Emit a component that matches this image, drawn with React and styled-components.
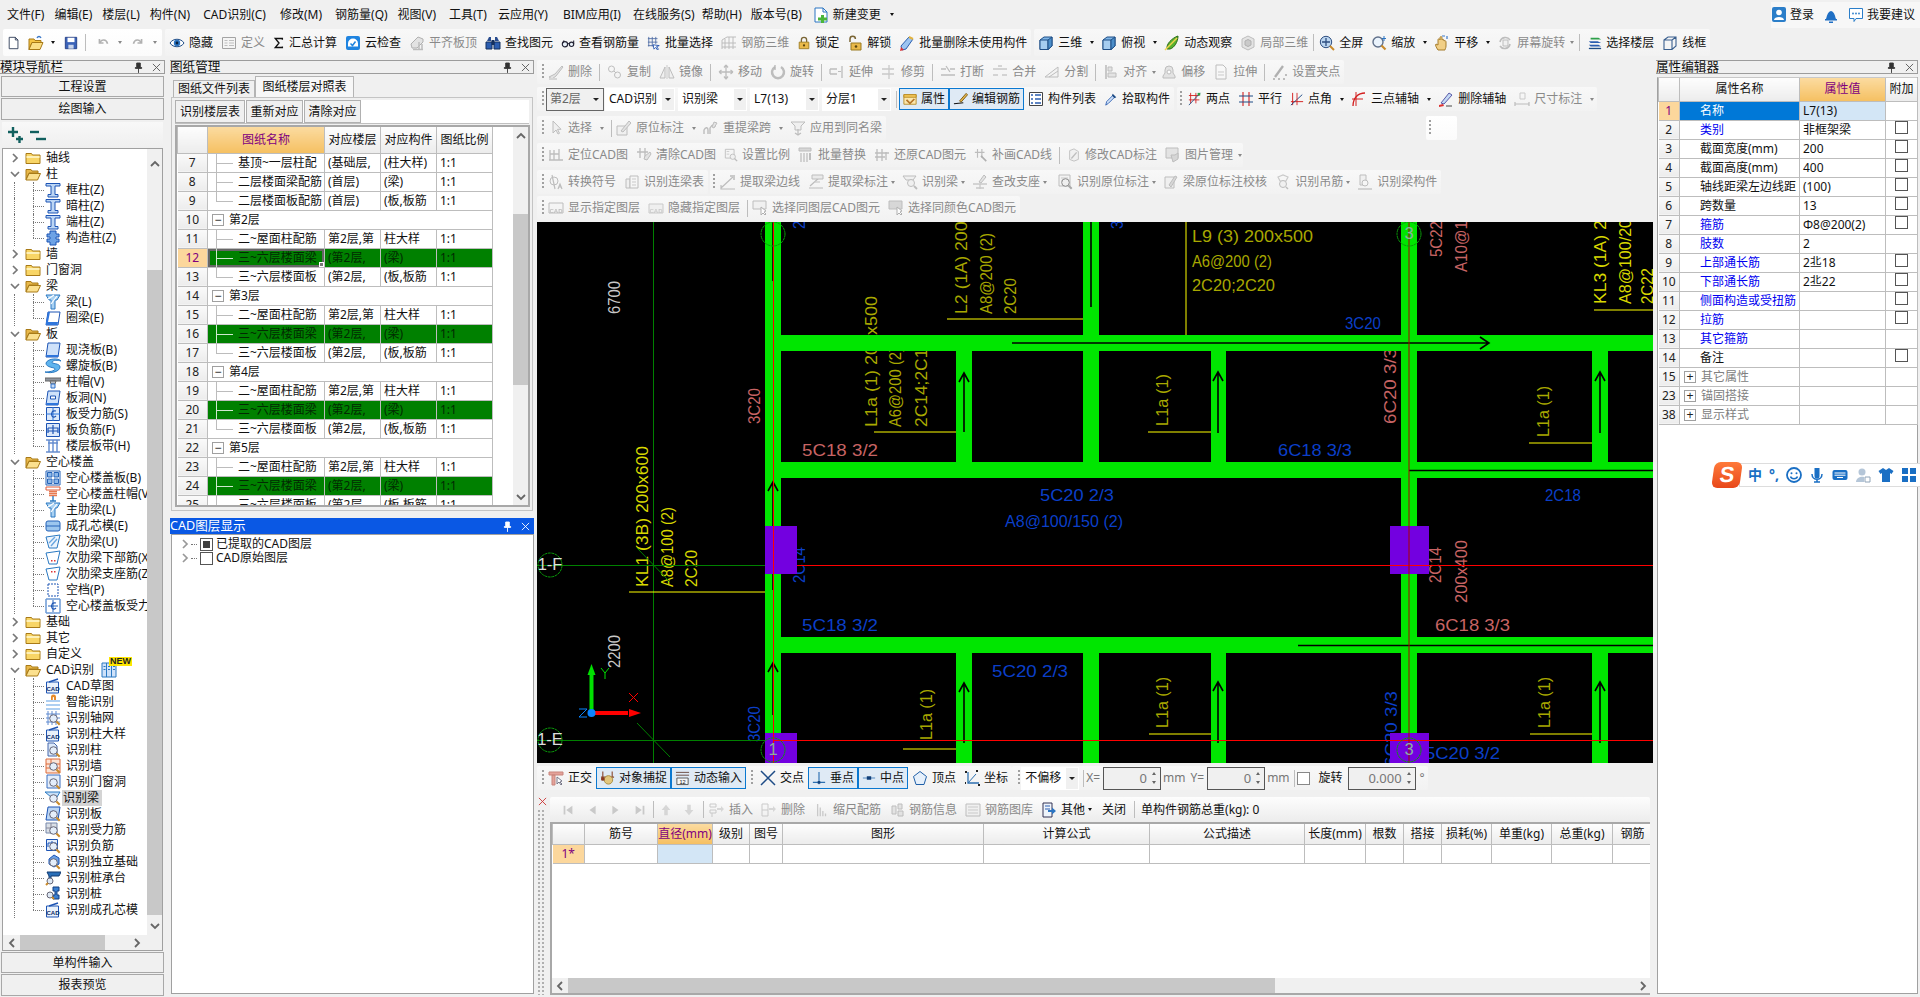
import React from 'react';
import styled, { createGlobalStyle, css } from 'styled-components';

const Global = createGlobalStyle`
  html, body { margin: 0; padding: 0; background: #f0f0f0; overflow: hidden; }
  * { box-sizing: border-box; }
  body { font-family: "Noto Sans", "Noto Sans CJK SC", sans-serif; font-size: 12px; color: #111; }
`;

const line = (d, c = '#555', w = 1) => <path d={d} fill="none" stroke={c} strokeWidth={w} />;
const fill = (d, f, c = 'none') => <path d={d} fill={f} stroke={c} />;
const mag = <g><circle cx="8.5" cy="8.5" r="3.8" fill="#e4eefa" stroke="#667" /><path d="M11.5 11.5l3.2 3.2" stroke="#c98a2a" strokeWidth="2" /></g>;
const cadTxt = (f = '#123') => <text x="8" y="13" fontSize="6" fontWeight="700" textAnchor="middle" fontFamily="Liberation Sans" fill={f}>CAD</text>;

const ICONS = {
  page: <>{fill('M2.5 1.5h7l3 3v10h-10z', '#fff', '#2b3a55')}{line('M9.5 1.5v3h3', '#2b3a55')}</>,
  open: <>{fill('M1 4h5l1 1.5h6v2H4l-3 7z', '#f6c544', '#a87a17')}{fill('M4 7.5h11l-3 7H1z', '#fbdf86', '#a87a17')}{line('M9 3c1-2 3-2 4 0', '#3a78c9', 1.3)}</>,
  save: <>{fill('M1.5 1.5h13v13h-13z', '#3a62b8', '#1f3a80')}{fill('M4 2h8v5H4z', '#fff')}{fill('M5 10h6v4.5H5z', '#c8d4ea')}</>,
  undo: <>{line('M3 3v5h5', '#999', 2)}{line('M3.5 8c2-5 8-5 9.5 1', '#999', 2)}</>,
  redo: <>{line('M13 3v5H8', '#999', 2)}{line('M12.5 8c-2-5-8-5-9.5 1', '#999', 2)}</>,
  eye: <>{fill('M1 8c3-5 11-5 14 0-3 5-11 5-14 0z', '#fff', '#1e4c86')}<circle cx="8" cy="8" r="3.2" fill="#2b74c2" /><circle cx="8" cy="8" r="1.4" fill="#0a2340" /></>,
  deflist: <>{fill('M1.5 2.5h13v11h-13z', '#f4f4f4', '#888')}{line('M3.5 5.5h3M3.5 8h3M3.5 10.5h3M8 5.5h5M8 8h5M8 10.5h5', '#aaa')}</>,
  sigma: <>{line('M12.5 3.5V2H3l5 6-5 6h9.5v-1.5', '#111', 1.8)}</>,
  cloud: <><rect x="1" y="1" width="14" height="14" rx="2" fill="#1f84e0" /><path d="M3 8.5a5 5 0 0 1 10 0v3H3z" fill="#fff" />{line('M5.5 8.5l2 2 3-4', '#1f84e0', 1.5)}</>,
  align: <>{fill('M2 9l7-7 5 2v3L8 13H3z', '#ddd', '#999')}{line('M4 14.5h10M10 7v7M13 9v5', '#aaa', 1.5)}</>,
  binoc: <>{fill('M2 6l2-4h2v4zM10 6V2h2l2 4z', '#2a4d8f')}{fill('M1 7h6v7H1zM9 7h6v7H9z', '#2b5db0', '#14305f')}{fill('M6.5 5h3v5h-3z', '#14305f')}</>,
  glasses: <><circle cx="4.5" cy="9.5" r="3" fill="#eaf2fb" stroke="#223" strokeWidth="1.3" /><circle cx="12" cy="9.5" r="2.5" fill="#eaf2fb" stroke="#223" strokeWidth="1.3" />{line('M7.5 9c1-1 1-1 2 0M1.5 9l2-4M14.5 9V5', '#223', 1.2)}</>,
  gridsel: <>{line('M2 1v11M6 1v11M10 1v8M1 3h11M1 7h11M1 11h7', '#4f6da6')}{fill('M7 10l7 1-3 1 2 3-1 1-2-3-2 2z', '#fff', '#1e4fae')}</>,
  rebar3d: <>{line('M1 5l5-3h9M1 5v9l0 0M4 4v10M8 2v12M12 2v12M1 8h14M1 12h14', '#aaa')}</>,
  lock: <>{line('M5 7V4.5a3 3 0 0 1 6 0V7', '#7a6535', 1.5)}{fill('M2.5 7h11v7.5h-11z', '#e9b94a', '#9a7a20')}<circle cx="8" cy="10.8" r="1.3" fill="#5a4510" /></>,
  unlock: <>{line('M3 7V4a2.7 2.7 0 0 1 5.4 0', '#7a6535', 1.5)}{fill('M4 8h10v7H4z', '#e9b94a', '#9a7a20')}<circle cx="9" cy="11.5" r="1.3" fill="#5a4510" /></>,
  brushdel: <>{fill('M2 11l8-9 4 2-7 10-4 1z', '#9cc4f0', '#2c5fae')}{fill('M2 12l3 3-4 1z', '#d33')}{line('M10 2l4 2', '#e4b440', 2)}</>,
  cube: <>{fill('M2 5l4-3h8v9l-4 3.5H2z', '#7fb5e6', '#1f4e86')}{fill('M2 5h8v9.5H2z', '#a6cdf0', '#1f4e86')}{fill('M10 5l4-3v9l-4 3.5z', '#4c8ec9', '#1f4e86')}</>,
  orbit: <>{fill('M3 14C2 9 8 3 14 1c0 6-4 12-8 13z', '#58b12f', '#2b6b16')}{line('M1 15L13 3', '#f2d34d', 1.4)}</>,
  local3d: <>{fill('M8 1l6 3v8l-6 3-6-3V4z', '#ddd', '#aaa')}{fill('M5 6l3-1.5L11 6v4l-3 1.5L5 10z', '#bbb', '#999')}</>,
  zoomall: <><circle cx="7" cy="7" r="5.7" fill="#bcd6f0" stroke="#2e4e80" />{line('M7 3v8M3 7h8', '#2e4e80', 1.3)}{line('M11 11l4 4', '#c98a2a', 2)}</>,
  zoom: <><circle cx="7" cy="7" r="5" fill="#eaf3fc" stroke="#60708a" strokeWidth="1.4" />{line('M10.5 10.5l4 4', '#c98a2a', 2.2)}{line('M13 1v5M11 3.5h4', '#2b74c2')}</>,
  hand: <>{fill('M4 15c-2-3-3-5-2-6l2 1V5c0-2 2-1 2 0V3c0-2 2-2 2 0v2c1-1 2-1 2 1 1-1 2 0 2 1v4c0 2-1 3-1 4z', '#f1cf86', '#a67c2b')}{line('M8 1l3-0M13 1v3', '#3a78c9', 1.2)}</>,
  rotscreen: <>{line('M3 7a5.5 5.5 0 0 1 10-2M13 9a5.5 5.5 0 0 1-10 2', '#aaa', 1.6)}{fill('M6 5h5v6H6z', '#eee', '#aaa')}</>,
  floors: <>{fill('M3 2h9l3 2H3z', '#2ea04a')}{fill('M1 6h10l4 2H3z', '#2b5db0')}{fill('M1 10h11l3 2H3z', '#2b5db0')}{fill('M1 13.5h14v1.5H1z', '#1e4c86')}</>,
  wire: <>{line('M2 5l4-3h8v9l-4 3.5H2zM2 5h8v9.5M10 5l4-3', '#3a5f8e', 1.1)}</>,
  erase: <>{fill('M1 13l6-3 7-8 1 1-7 9-4 3z', '#ddd', '#aaa')}{line('M1 15h8', '#ccc', 2)}</>,
  copy: <><circle cx="4.5" cy="5" r="3" fill="none" stroke="#aaa" /><circle cx="10.5" cy="11" r="3" fill="none" stroke="#aaa" />{line('M7 7l2 2', '#aaa')}</>,
  mirror: <>{fill('M1 14L6 3v11z', '#eee', '#aaa')}{fill('M15 14L10 3v11z', '#eee', '#aaa')}{line('M8 1v14', '#bbb')}</>,
  move: <>{line('M8 1v14M1 8h14M8 1L6 3.5M8 1l2 2.5M8 15l-2-2.5M8 15l2-2.5M1 8l2.5-2M1 8l2.5 2M15 8l-2.5-2M15 8l-2.5 2', '#aaa', 1.3)}</>,
  rot: <>{line('M5 3a6 6 0 1 0 6 0', '#aaa', 2.5)}{line('M5 1v5', '#999', 1.2)}</>,
  extend: <>{line('M1 5h7M1 10h7M1 5v5M13 2v12', '#aaa', 1.3)}{line('M9 7.5h3', '#aaa')}</>,
  trim: <>{line('M8 1v14M1 5h12M1 10h12', '#bbb', 1.3)}</>,
  brk: <>{line('M1 5h5M10 5h5M1 11h14M6 2l4 6', '#aaa', 1.3)}</>,
  merge: <>{line('M1 5h14M1 11h5M10 11h5M6 2l4 0', '#bbb', 1.3)}</>,
  split: <>{fill('M1 13L14 3v10z', '#f2f2f2', '#aaa')}{line('M5 13l9-6', '#aaa')}</>,
  alignl: <>{line('M3 1v14', '#999', 1.3)}{fill('M5 3h4v4H5zM5 9h8v4H5z', '#ddd', '#aaa')}</>,
  offset: <><path d="M8 2a4 4 0 0 1 4 4v3l2 3v2H2v-2l2-3V6a4 4 0 0 1 4-4z" fill="#ddd" stroke="#aaa" /><circle cx="8" cy="8" r="2" fill="#fff" stroke="#aaa" /></>,
  stretch: <>{fill('M3 1h7l3 3v11H3z', '#f8f8f8', '#aaa')}{line('M5 8h6M5 11h6', '#bbb')}</>,
  grips: <>{line('M3 13L11 2', '#999', 2.3)}{line('M1 15h2M6 15h2M11 15h2M14 10v2', '#aaa', 2)}</>,
  prop: <>{fill('M1 3h14v11H1z', '#fbe7ae', '#b78a24')}{fill('M1 3h14v3H1z', '#f3c75a', '#b78a24')}{line('M4 9l4 4 5-5', '#b5762a', 2)}</>,
  pen: <>{line('M1 13c4-1 6 0 10-1', '#111', 1.2)}{fill('M7 10l7-8 1.5 1.5-7 8z', '#e7b64a', '#7a5a12')}</>,
  list: <>{fill('M1.5 1.5h13v13h-13z', '#fff', '#444')}{line('M3 4h2M3 8h2M3 12h2M7 4h6M7 8h6M7 12h6', '#2b5db0', 1.4)}</>,
  dropper: <>{fill('M2 15l1-4 7-7 2 2-7 7z', '#cfe1f6', '#2b5db0')}{fill('M10 2l4 4-2 1-3-3z', '#1e4c86')}</>,
  xtwo: <>{line('M3 1v12M9 1v12M1 4h12M1 9h12', '#d32020')}{line('M1 15L14 1', '#1e4c86')}{fill('M11 1h3v3h-3z', '#2ea04a')}</>,
  xpar: <>{line('M5 1v14M11 1v14', '#d32020', 1.1)}{line('M1 5h14M1 11h14', '#1e4c86', 1.1)}</>,
  xang: <>{line('M3 1v14M1 11h14', '#d32020', 1.1)}{line('M1 15L14 3', '#1e4c86', 1.1)}{line('M8 1v14', '#d32020')}</>,
  xarc: <>{line('M2 15C2 7 7 2 14 2', '#d32020', 1.3)}{line('M5 1v14M1 8h11', '#d32020')}</>,
  xdel: <>{fill('M3 12l8-10 3 2-8 9z', '#c3d9f5', '#5a5aa8')}{fill('M1 14l4-1 1 2-5 1z', '#d33')}{line('M8 15h6', '#777', 1.4)}</>,
  dim: <>{line('M1 15V11M15 15V11M1 13h14', '#aaa', 1.2)}{line('M6 2h5v6H6z', '#bbb')}</>,
  cursor: <>{fill('M5 1v12l3-3 2 4 1.5-.7-2-4H13z', '#eee', '#aaa')}</>,
  orig: <>{fill('M1 6h10v9H1z', '#eee', '#aaa')}{fill('M5 11l8-10 2 2-8 9z', '#ddd', '#aaa')}</>,
  rebeam: <>{line('M1 14V10c2-4 4-2 4 0v4M7 14V8c3-5 5-3 5-1', '#aaa', 1.4)}{fill('M11 2l3 1-3 5-2-1z', '#ddd', '#aaa')}</>,
  apply: <>{fill('M1 2h14l-4 4v4H5V6z', '#eee', '#aaa')}{line('M8 9v6M5 13l3 2 3-2', '#aaa', 1.2)}</>,
  cadpin: <>{line('M2 3v10M6 3v10M2 7h9M1 13h14M11 2v11', '#aaa', 1.3)}</>,
  cadclr: <>{line('M4 1v10M9 1v10M1 5h11', '#aaa', 1.3)}{fill('M9 9l5-4 1 2-4 6-3-1z', '#ddd', '#aaa')}</>,
  scale: <>{fill('M1.5 1.5h10v10h-10z', '#f4f4f4', '#aaa')}{line('M3 4h3M3 7h3', '#bbb')}<circle cx="10" cy="10" r="3" fill="#eee" stroke="#aaa" />{line('M12 12l3 3', '#aaa', 1.6)}</>,
  swap: <>{fill('M1 1h12v3H1z', '#ccc', '#aaa')}{line('M3 6v9M6 6v9M9 6v9', '#bbb', 1.6)}{line('M12 6v7', '#aaa', 2)}</>,
  restore: <>{line('M3 2v12M8 2v12M1 6h14M12 5v8M1 10h10', '#aaa', 1.3)}</>,
  redraw: <>{line('M4 1v10M9 1v10M1 5h11', '#aaa', 1.3)}{line('M8 9l6 6', '#999', 1.8)}</>,
  cadedit: <>{fill('M3 3l5-2 5 3v9l-5 2-5-2z', '#eee', '#aaa')}{line('M5 12l6-7', '#aaa', 1.5)}</>,
  pic: <>{fill('M1 1h12v10H1z', '#ddd', '#aaa')}{fill('M6 8h4l3-2v6l-5 3z', '#ccc', '#aaa')}</>,
  phi: <>{line('M4 1l3 14', '#aaa', 1.2)}<circle cx="6" cy="7" r="4" fill="none" stroke="#aaa" />{line('M10 15l2-5 2 5M11 13h2', '#aaa', 1.2)}</>,
  lbl: <>{fill('M2 5h4v9H2z', '#eee', '#aaa')}{fill('M6 2h8v12H6z', '#f6f6f6', '#aaa')}{line('M8 5h4M8 8h4M8 11h4', '#bbb')}</>,
  edge: <>{line('M1 14L14 2M1 11V15H15', '#aaa', 1.2)}{fill('M10 1h5v5h-2V3h-3z', '#bbb')}</>,
  mark: <>{line('M1 14h14M2 12L12 3', '#aaa', 1.2)}{fill('M4 1h11v4H4z', '#e6e6e6', '#aaa')}{line('M6 8h6', '#bbb', 1.2)}</>,
  recog: <>{fill('M1 2h13l-3 4H4z', '#eee', '#aaa')}<circle cx="9" cy="9" r="3.5" fill="#eee" stroke="#aaa" />{line('M12 12l3 3', '#aaa', 1.8)}</>,
  support: <>{line('M1 10h14M8 10v5M4 14h8', '#bbb', 1.3)}{fill('M7 8l5-7 2 2-5 6z', '#ddd', '#aaa')}</>,
  recmark: <>{fill('M2 1h11v11H2z', '#f2f2f2', '#aaa')}{line('M4 4h7M4 7h5', '#bbb')}{mag}</>,
  check: <>{fill('M2 3h9v11H2z', '#eee', '#aaa')}{fill('M6 11l6-9 2 1-6 10z', '#ccc', '#aaa')}</>,
  hang: <>{line('M3 3l5-2 5 2-2 4H5z', '#bbb', 1.2)}<circle cx="8" cy="10" r="3.5" fill="#eee" stroke="#aaa" />{line('M11 13l2 2', '#aaa', 1.5)}</>,
  recbeam: <>{fill('M3 1h6v10H3z', '#eee', '#aaa')}<circle cx="8" cy="9" r="3" fill="#f6f6f6" stroke="#aaa" />{line('M1 15h14', '#bbb', 1.6)}</>,
  cadshow: <>{fill('M1 3h14v10H1z', '#f4f4f4', '#aaa')}{cadTxt('#aaa')}</>,
  cadhide: <>{fill('M1 4h14v9H1z', '#ededed', '#bbb')}{cadTxt('#bbb')}</>,
  cadsel: <>{fill('M1 1h13v8H1z', '#eee', '#aaa')}{fill('M9 7v8l2-2 2 2 1-1-2-2 2-1z', '#fff', '#999')}</>,
  cadcol: <>{fill('M1 1h13v8H1z', '#ccc', '#aaa')}{fill('M9 7v8l2-2 2 2 1-1-2-2 2-1z', '#fff', '#999')}</>,
  ortho: <>{fill('M1 2h14v3H1zM4 5h3v10H4z', '#e4a29a', '#c9857c')}{fill('M9 7v7l2-2 2 3 1-1-2-2 2-1z', '#fff', '#778')}</>,
  snap: <>{line('M3 1v6M13 1v6M1 7h14', '#8a4a30', 1.2)}<circle cx="9" cy="10" r="4.5" fill="#e2c77e" stroke="#a78b3e" /><circle cx="3" cy="9" r="2" fill="#8a3a20" /></>,
  dyn: <>{line('M1 2h14M1 5h14', '#6a4a40')}{fill('M2 8h12v7H2z', '#f6f6f6', '#555')}<text x="8" y="14" fontSize="6" textAnchor="middle" fontFamily="Liberation Sans" fill="#111">12</text></>,
  inter: <>{line('M1 1l14 14M15 1L1 15', '#1e4c86', 1.5)}</>,
  perp: <>{line('M8 1v14M1 13h14', '#2c6fb0', 1.3)}{fill('M6.5 11.5h3v3h-3z', '#12407a')}</>,
  mid: <>{line('M1 8h14', '#7fa7d2', 1.6)}{fill('M5.5 6h5v4h-5z', '#12407a')}</>,
  vert: <>{fill('M8 1.5l6.5 5-2.5 8H4l-2.5-8z', '#e6f0fb', '#1f5fa8')}</>,
  coord: <>{line('M4 2v11h11', '#2c6fb0', 1.3)}{line('M4 13l8-9', '#2c6fb0')}{line('M1 2h2M12 1h2M1 13h1M14 15h2', '#222', 2)}</>,
  first: <>{fill('M3 3h2v10H3zM13 3v10L6 8z', '#bbb')}</>,
  prev: <>{fill('M11 3v10L4 8z', '#bbb')}</>,
  next: <>{fill('M5 3v10l7-5z', '#bbb')}</>,
  last: <>{fill('M11 3h2v10h-2zM3 3v10l7-5z', '#bbb')}</>,
  up: <>{fill('M8 2l5 6h-3v6H6V8H3z', '#ccc')}</>,
  down: <>{fill('M8 14l5-6h-3V2H6v6H3z', '#ccc')}</>,
  ins: <>{line('M1 2h6v3H1zM1 8h6v3H1zM3 11v4', '#bbb')}{fill('M8 6h4V4l3 3-3 3V8H8z', '#ccc')}</>,
  del: <>{line('M1 2h6v12H1zM1 8h6', '#bbb')}{fill('M8 6h4V4l3 3-3 3V8H8z', '#ccc')}</>,
  bend: <>{line('M3 1v14M6 5v10M9 9v6M12 12v3', '#bbb', 1.5)}</>,
  info: <>{fill('M3 4h4v8H3zM9 2h4v5H9zM9 9h5v5H9z', '#ddd', '#aaa')}</>,
  lib: <>{fill('M1 2h14v12H1z', '#eee', '#aaa')}{line('M3 5h10M3 8h10M3 11h10', '#bbb')}</>,
  other: <>{fill('M2 1h9v14H2z', '#eef4fb', '#335')}{line('M4 4h5M4 7h5', '#2b5db0')}{fill('M7 8h4V5.5l4 3.5-4 3.5V10H7z', '#2b74c2')}</>,
  plus2: <>{line('M1 5h10M6 0v10', '#11605f', 2.4)}{line('M9 12h7M12.5 9v7', '#11605f', 2.4)}</>,
  minus2: <>{line('M0 5h9', '#11605f', 2.4)}{line('M6 12h10', '#11605f', 2.4)}</>,
  newchg: <>{fill('M2 1h8l4 4v10H2z', '#fff', '#2b74c2')}{line('M10 1v4h4', '#2b74c2')}{fill('M8 8h3v2.5h3v3h-3V16H8v-2.5H5v-3h3z', '#4bb53a')}</>,
  login: <><rect x="1" y="0" width="14" height="15" rx="2" fill="#2b7ec9" /><circle cx="8" cy="5.5" r="2.8" fill="#fff" /><path d="M3 13c0-4 10-4 10 0z" fill="#fff" /></>,
  bell: <>{fill('M3 12c1-2 1-7 5-8 4 1 4 6 5 8z', '#1f6fc4')}{fill('M2 12h12v1.5H2zM6 14.5h4V16H6z', '#1f6fc4')}</>,
  chat: <>{fill('M1.5 1.5h13v10H8l-2 3v-3H1.5z', '#fff', '#2b7ec9')}<circle cx="5" cy="6.5" r=".9" fill="#2b7ec9" /><circle cx="8" cy="6.5" r=".9" fill="#2b7ec9" /><circle cx="11" cy="6.5" r=".9" fill="#2b7ec9" /></>,
  folder: <>{fill('M1 3.5h5.5l1 1.5H15v8.5H1z', '#f8d566', '#a87a17')}{fill('M1.5 6h13v2h-13z', '#fdf0b8')}</>,
  folderOpen: <>{fill('M1 3.5h5l1 1.5h6v2H4l-3 6.5z', '#e8b84a', '#a87a17')}{fill('M4 7.5h11.5l-3 6.5H1z', '#fbe08e', '#a87a17')}</>,
  col: <>{fill('M1 1.5h14v2.5H10v8.5h3V15H3v-2.5h3V4H1z', '#bcd6f5', '#1d54b4')}</>,
  gz: <>{fill('M5 1h6v3h3v3h-3v2h3v3h-3v3H5v-3H2V9h3V7H2V4h3z', '#6da2e5', '#1d54b4')}</>,
  beam: <>{fill('M1 1h14l-3 5H10v9H6V6H4z', '#a9d1f2', '#2a79c2')}{line('M3 5l6-4M6 10l6-8', '#fff', 1.2)}</>,
  ring: <>{fill('M3 2h12l-2 13H1z', '#fff', '#1d54b4')}{fill('M1 12l2-10 2 0-2 10h10l-.5 3H1z', '#2f76dc')}</>,
  slab: <>{fill('M3 1h12l-2 14H1z', '#cfe2fa', '#1d54b4')}{fill('M1 13l1 2h11l.4-2z', '#2f76dc')}</>,
  spiral: <>{fill('M1 5c2-5 13-5 15-2-3-1-8-1-9 1s8 1 8 5-8 7-15 5c4 0 10-1 10-3S1 10 1 5z', '#5fb4ee', '#2a79c2')}</>,
  cap: <>{fill('M0 4h16v3H0z', '#8f959e', '#666')}{fill('M5 7h6l-1 3H6z', '#b8bdc4', '#666')}{fill('M6 10h4v4H6z', '#c9dcf5', '#2a6fc9')}</>,
  hole: <>{fill('M3 1h12l-2 14H1z', '#cfe2fa', '#1d54b4')}{fill('M5.5 6h5v3h-5z', '#fff', '#1d54b4')}{fill('M1 13l1 2h11l.4-2z', '#2f76dc')}</>,
  rebar: <>{fill('M1.5 1.5h13v13h-13z', '#dce9fa', '#1d54b4')}{line('M1 8h14M8 1v14', '#2f76dc')}{line('M11 5C7 4 6 7 7 10c1 2 3 1 4 0', '#1d54b4', 1.2)}</>,
  neg: <>{fill('M1.5 1.5h13v13h-13z', '#dce9fa', '#1d54b4')}{line('M3 6h10v5M3 6v5M3 9h10M8 3v9', '#1d54b4', 1.2)}</>,
  band: <>{line('M1 2h14M1 14h14M3 5h10', '#1d54b4')}{line('M4 2v12M8 2v12M12 2v12', '#5f8ad0', 1.4)}</>,
  grid4: <>{fill('M1 1h14v14H1z', '#fff', '#2463b8')}{fill('M2.5 2.5h4.5v4.5H2.5zM9 2.5h4.5v4.5H9zM2.5 9h4.5v4.5H2.5zM9 9h4.5v4.5H9z', '#8cb8ea', '#2463b8')}</>,
  capr: <>{fill('M1 1h14v3H1z', '#fff', '#dd5a3a')}{line('M4 5.5h8M4 7.5h8M4 9.5h8', '#e77a52', 1.4)}{line('M8 10v5M5 15h6', '#2a79c2', 1.4)}</>,
  core: <>{fill('M3 3h10a2 2 0 0 1 2 2v6a2 2 0 0 1-2 2H3a2 2 0 0 1-2-2V5a2 2 0 0 1 2-2z', '#9cc6ee', '#2463b8')}{line('M1 8h14', '#2463b8')}</>,
  rib: <>{fill('M1 3l14-2-3 13H4z', '#eef5fd', '#2a79c2')}{line('M4 9l6-6M6 12l6-7', '#69a6e0', 1.4)}</>,
  ribd: <>{fill('M1 3l14-2-3 13H4z', '#fff', '#2a79c2')}{fill('M6 10h1.5v1.5H6zM9 10h1.5v1.5H9z', '#d33')}</>,
  ribu: <>{fill('M1 3l14-2-3 13H4z', '#fff', '#2a79c2')}{fill('M6 5h1.5v1.5H6zM9 5h1.5v1.5H9z', '#d33')}</>,
  gapb: <><path d="M3 2h10v12H3z" fill="#fff" stroke="#1d54b4" strokeDasharray="2 1" /></>,
  rebard: <>{fill('M1 1h14v14H1z', '#fff', '#2463b8')}<path d="M1 1h14v14H1z" fill="none" stroke="#8cb8ea" strokeDasharray="1 1" />{line('M8 2v12M3 8h10', '#2463b8')}{line('M11 5C7 4 6 7 7 10c1 2 3 1 4 0', '#1d54b4', 1.2)}</>,
  cadDoc: <>{fill('M1.5 4h12v11h-12z', '#eaf2fb', '#1d54b4')}{line('M4 4l9-3', '#1d54b4', 1.4)}{cadTxt('#0c2a66')}</>,
  smart: <>{line('M1 7h14M1 11h14M1 15h14', '#5f9fe5', 1.2)}<path d="M4 1h0" />{fill('M6 6V3a2.5 2.5 0 0 1 5 0v3H9V3.5a.6.6 0 0 0-1.2 0V6z', '#e78a2a')}</>,
  axisr: <>{line('M3 1v14M7 1v14M11 1v14M1 4h14M1 8h14M1 12h14', '#5f8ad0')}{mag}</>,
  rcol: <>{fill('M3 1h6l3 3v10H3z', '#dce9fa', '#4466aa')}{mag}</>,
  rwall: <>{fill('M1 1h14v14H1z', '#fbe3d6', '#dd6a3a')}{line('M1 6h14M1 10h14M6 1v5M10 6v4', '#dd6a3a')}{mag}</>,
  rdoor: <>{fill('M2 1h13v13H2z', '#e4eefb', '#3a6fc0')}{mag}</>,
  rbeam: <>{fill('M0 2h15l-3 5H6z', '#c9e0f7', '#2a79c2')}{mag}</>,
  rslab: <>{fill('M3 1h12l-2 13H1z', '#bcd6f5', '#1d54b4')}<circle cx="8" cy="8" r="3" fill="#5fb4ee" stroke="#1d54b4" />{mag}</>,
  rbar: <>{fill('M1 1h11v10H1z', '#dadfe6', '#7788aa')}{line('M1 6h11M6 1v10', '#889')}{mag}</>,
  rneg: <>{fill('M1.5 1.5h11v11h-11z', '#e4eefb', '#1d54b4')}{line('M3 5h8v4M3 5v4M7 3v7', '#1d54b4')}{mag}</>,
  rfnd: <>{fill('M4 5l5-4 5 3v6l-5 3-5-3z', '#6da2e5', '#1d54b4')}{mag}</>,
  rcap: <>{fill('M2 2h14l-2 4H6v4H4V6z', '#2a6fb8', '#103a70')}<circle cx="5" cy="11" r="3" fill="#dfe9f5" stroke="#667" />{line('M3 13l-2 2', '#c98a2a', 2)}</>,
  rpile: <>{fill('M8 1h6v4h-2v4h2v4H8V9h2V5H8z', '#3a7fd0', '#123f80')}<circle cx="5" cy="9" r="3" fill="#dfe9f5" stroke="#667" />{line('M7 11l2 2', '#c98a2a', 2)}</>,
  lines: <>{fill('M1 1h14v14H1z', '#cfe2fa', '#2a79c2')}{line('M5.5 1v14M10.5 1v14', '#2a79c2')}{fill('M2.5 4h2v1h-2zM7 4h2v1H7zM12 4h2v1h-2zM2.5 7h2v1h-2zM7 7h2v1H7zM12 7h2v1h-2z', '#2a79c2')}</>,
  smile: <><circle cx="8" cy="8" r="7" fill="#fff" stroke="#1a6fc4" strokeWidth="1.8" /><circle cx="5.5" cy="6.2" r="1" fill="#1a6fc4" /><circle cx="10.5" cy="6.2" r="1" fill="#1a6fc4" />{line('M4.5 9.5c1 3 6 3 7 0', '#1a6fc4', 1.5)}</>,
  mic: <>{fill('M5.5 1h5v8a2.5 2.5 0 0 1-5 0z', '#1a6fc4')}{line('M3 7c0 7 10 7 10 0M8 13v2M5 15h6', '#1a6fc4', 1.5)}</>,
  kbd: <><rect x="0.5" y="3" width="15" height="10" rx="2" fill="#1a6fc4" />{line('M2.5 6h11M2.5 8.2h11M5 10.5h6', '#fff', 1)}</>,
  userlock: <><circle cx="7" cy="5" r="3.5" fill="#b5c6d8" /><path d="M1 15c0-5 6-6 8-5v5z" fill="#b5c6d8" />{fill('M10 10h5v5h-5z', '#fff', '#90a4b8')}</>,
  shirt: <>{fill('M5 1l3 2 3-2 4.5 3-2 3-1.5-1v9H4V6L2.500 7 .5 4z', '#1a6fc4')}</>,
  apps: <>{fill('M1 1h6v6H1zM9 1h6v6H9zM1 9h6v6H1zM9 9h6v6H9z', '#1a6fc4')}</>,
};

const IconSvg = styled.svg`
  width: ${p => p.$w || 16}px;
  height: ${p => p.$h || 16}px;
  flex: none;
  display: block;
  ${p => p.$off && 'filter: grayscale(1) opacity(.75);'}
`;
const Ico = ({ n, w, h, off }) => <IconSvg viewBox="0 0 16 16" $w={w} $h={h} $off={off}>{ICONS[n]}</IconSvg>;

const Page = styled.div`
  position: relative;
  width: 1920px;
  height: 997px;
  overflow: hidden;
  display: flex;
  flex-direction: column;
  background: #f0f0f0;
  line-height: 16px;
`;

/* ===== Menu ===== */
const MenuBar = styled.div`
  height: 29px;
  display: flex;
  align-items: center;
  gap: 10px;
  padding-left: 7px;
`;
const MenuItem = styled.span`
  white-space: nowrap;
  margin-left: ${p => p.$ml || 0}px;
`;
const MenuExtra = styled.div`
  display: flex;
  align-items: center;
  gap: 4px;
  white-space: nowrap;
  margin-left: 1px;
`;
const MenuRight = styled.div`
  margin-left: auto;
  display: flex;
  align-items: center;
  gap: 3px;
  padding-right: 5px;
  height: 26px;
  background: #f7f7f7;
`;

/* ===== Toolbars ===== */
const Strip = styled.div`
  display: flex;
  height: ${p => p.$h || 24}px;
  margin-top: ${p => p.$mt || 0}px;
  flex: none;
`;
const Bar = styled.div`
  display: flex;
  align-items: center;
  height: 100%;
  margin-left: ${p => p.$ml || 0}px;
  padding-right: ${p => p.$pr || 0}px;
  background: ${p => p.$white ? 'linear-gradient(#fff,#fbfbfb)' : 'linear-gradient(#f8f8f8,#f2f2f2)'};
  border-radius: 2px;
`;
const ItemBox = styled.div`
  display: flex;
  align-items: center;
  gap: ${p => p.$gap}px;
  height: 22px;
  padding: 0 4px;
  flex: none;
  margin-left: ${p => p.$ml || 0}px;
  white-space: nowrap;
  color: ${p => p.$off ? '#8a8a8a' : '#111'};
  ${p => p.$sel && css`
    padding: 0 3px;
    border: 1px solid #0a78d0;
    background: #dfeaf5;
  `}
`;
const CaretBox = styled.div`
  flex: none;
  width: ${p => p.$w}px;
  margin: 0 ${p => p.$tight ? 2 : 0}px 0 ${p => p.$tight ? -2 : 0}px;
  display: flex;
  justify-content: center;
  &::after {
    content: '';
    border-left: 2.5px solid transparent;
    border-right: 2.5px solid transparent;
    border-top: 3px solid ${p => p.$off ? '#888' : '#111'};
  }
`;
const Sep = styled.div`
  flex: none;
  width: 1px;
  height: 17px;
  background: #bdbdbd;
  margin: 0 ${p => p.$r ?? 3}px 0 ${p => p.$l ?? 3}px;
`;
const Grip = styled.div`
  flex: none;
  width: ${p => p.$w || 4}px;
  height: 16px;
  margin-left: ${p => p.$ml ?? 0}px;
  background: radial-gradient(circle at 1px 1px, #a0a0a0 1px, transparent 1px) 0 0 / 3px 4px repeat-y;
`;
const Tool = ({ i, w, t, off, c, tight, ml, sel }) => (
  <>
    <ItemBox $gap={t && i ? 4 : 0} $off={off} $ml={ml} $sel={sel}>
      {i && <Ico n={i} w={w} off={off} />}
      {t && <span>{t}</span>}
    </ItemBox>
    {c && <CaretBox $w={c} $off={off} $tight={tight} />}
  </>
);
const tools = (arr) => arr.map((a, k) => {
  if (a === '|') return <Sep key={k} />;
  if (typeof a === 'object' && a.sep) return <Sep key={k} $l={a.l} $r={a.r} />;
  return <Tool key={k} {...a} />;
});

const Combo = styled.div`
  flex: none;
  width: ${p => p.$w}px;
  height: 23px;
  margin: 0 ${p => p.$mr || 0}px 0 ${p => p.$ml || 0}px;
  display: flex;
  align-items: center;
  padding-left: 3px;
  background: ${p => p.$framed ? '#f0f0f0' : '#fff'};
  border: 1px solid ${p => p.$framed ? '#666' : '#fff'};
  color: ${p => p.$framed ? '#666' : '#111'};
  white-space: nowrap;
  position: relative;
`;
const ComboArrow = styled.span`
  margin-left: auto;
  width: ${p => p.$plain ? 14 : 12}px;
  height: 100%;
  background: ${p => p.$plain ? 'transparent' : '#f0f0f0'};
  display: flex;
  align-items: center;
  justify-content: center;
  &::after {
    content: '';
    border-left: 3px solid transparent;
    border-right: 3px solid transparent;
    border-top: 3px solid #222;
  }
`;
const Txt = styled.span`
  flex: none;
  white-space: nowrap;
  margin-left: ${p => p.$ml || 0}px;
  color: ${p => p.$c || '#111'};
`;
const NumBox = styled.div`
  flex: none;
  width: ${p => p.$w}px;
  height: 23px;
  margin-left: ${p => p.$ml || 0}px;
  background: #f0f0f0;
  border: 1px solid #555;
  display: flex;
  align-items: center;
  justify-content: flex-end;
  color: #777;
  padding-right: 4px;
  font-size: 13px;
  gap: 5px;
`;
const Spin = styled.span`
  display: flex;
  flex-direction: column;
  gap: 6px;
  &::before, &::after {
    content: '';
    border-left: 2.500px solid transparent;
    border-right: 2.500px solid transparent;
  }
  &::before { border-bottom: 3px solid #666; }
  &::after { border-top: 3px solid #666; }
`;
const Check = styled.span`
  flex: none;
  display: inline-block;
  width: 13px;
  height: 13px;
  margin-left: ${p => p.$ml || 0}px;
  background: #fff;
  border: 1px solid ${p => p.$c || '#555'};
  ${p => p.$on && css`box-shadow: inset 0 0 0 2px #fff, inset 0 0 0 7px #404040;`}
`;

/* ===== Workspace ===== */
const Workspace = styled.div`
  flex: 1;
  display: flex;
  padding-top: 4px;
  min-height: 0;
`;
const Col = styled.div`
  flex: none;
  width: ${p => p.$w}px;
  margin-right: ${p => p.$mr || 0}px;
  display: flex;
  flex-direction: column;
  min-height: 0;
  position: relative;
`;
const Title = styled.div`
  flex: none;
  height: ${p => p.$h || 14}px;
  margin-top: ${p => p.$mt || 0}px;
  display: flex;
  align-items: center;
  font-size: 12.6px;
  border: 1px solid #9c9c9c;
  border-width: 1px 1px 1px 0;
  ${p => p.$active && css`
    background: #0a58e4;
    color: #fff;
    border-color: #0a58e4;
  `}
  white-space: nowrap;
  position: relative;
`;
const TitleBtns = styled.span`
  margin-left: auto;
  display: flex;
  align-items: center;
  gap: 9px;
  padding-right: 3px;
`;
const Pin = ({ c = '#333' }) => <IconSvg viewBox="0 0 10 12" $w={9} $h={11}><path d="M3 1h4v5h1.500v1h-7V6H3zM5 7v5" fill={c} stroke={c} /></IconSvg>;
const Cross = ({ c = '#555' }) => <IconSvg viewBox="0 0 10 10" $w={9} $h={9}><path d="M1 1l8 8M9 1L1 9" stroke={c} /></IconSvg>;

const NavBtn = styled.div`
  flex: none;
  height: ${p => p.$h}px;
  margin-top: ${p => p.$mt || 0}px;
  margin-left: 1px;
  width: 163px;
  background: #f0f0f0;
  border: 1px solid #a8a8a8;
  display: flex;
  align-items: center;
  justify-content: center;
`;
const TreeTools = styled.div`
  flex: none;
  height: 26px;
  margin-top: 2px;
  margin-left: 2px;
  width: 161px;
  display: flex;
  align-items: center;
  gap: 7px;
  padding-left: 5px;
  background: linear-gradient(#f8f8f8, #efefef);
`;
const TreeFrame = styled.div`
  flex: none;
  height: 803px;
  margin-left: 2px;
  width: 161px;
  border: 1px solid #a0a0a0;
  background: #fff;
  display: flex;
  flex-direction: column;
`;
const TreeBody = styled.div`
  flex: 1;
  min-height: 0;
  display: flex;
`;
const TreeList = styled.div`
  flex: 1;
  min-width: 0;
  overflow: hidden;
  padding-top: 1px;
`;
const TreeRow = styled.div`
  position: relative;
  height: 16px;
  display: flex;
  align-items: center;
  white-space: nowrap;
  padding-left: ${p => p.$child ? 42 : 22}px;
  &::before {
    content: '';
    position: absolute;
    left: 11px;
    top: 0;
    bottom: ${p => p.$endRoot ? '8px' : '0'};
    border-left: 1px dotted #777;
  }
  ${p => p.$child && css`
    &::after {
      content: '';
      position: absolute;
      left: 30px;
      top: 0;
      width: 11px;
      height: ${p.$last ? 8 : 16}px;
      border-left: 1px dotted #777;
    }
  `}
`;
const ChildDash = styled.span`
  position: absolute;
  left: 30px;
  top: 8px;
  width: 11px;
  border-top: 1px dotted #777;
`;
const Twisty = styled.span`
  position: absolute;
  left: 6px;
  top: 0;
  height: 16px;
  width: 12px;
  background: #fff;
  display: flex;
  align-items: center;
  justify-content: center;
  z-index: 1;
`;
const TreeLabel = styled.span`
  margin-left: ${p => p.$ml ?? 4}px;
  padding: 0 1px;
  ${p => p.$sel && 'background: #d4d4d4; padding-right: 3px;'}
`;
const NewBadge = styled.span`
  position: absolute;
  left: 106px;
  top: -5px;
  background: #ffe600;
  color: #222;
  font: 700 9px/9px "Liberation Sans", sans-serif;
  padding: 0 1px;
`;
const SmallIconSlot = styled.span`
  margin-left: 6px;
  flex: none;
`;
const Chev = ({ open, c = '#777' }) => (
  <IconSvg viewBox="0 0 10 10" $w={10} $h={10}>
    <path d={open ? 'M1 3l4 4 4-4' : 'M3 1l4 4-4 4'} fill="none" stroke={c} strokeWidth="1.700" />
  </IconSvg>
);

/* scrollbars */
const VScroll = styled.div`
  flex: none;
  width: 15px;
  display: flex;
  flex-direction: column;
  background: #f0f0f0;
`;
const HScroll = styled.div`
  flex: none;
  height: 15px;
  display: flex;
  background: #f0f0f0;
  align-items: stretch;
`;
const ArrowSlot = styled.div`
  flex: none;
  ${p => p.$h ? `height: ${p.$h}px;` : ''}
  ${p => p.$w ? `width: ${p.$w}px;` : ''}
  display: flex;
  align-items: center;
  justify-content: center;
`;
const Track = styled.div`
  flex: 1;
  min-width: 0;
  min-height: 0;
  display: flex;
`;
const VThumb = styled.div`
  width: 100%;
  height: ${p => p.$len}px;
  margin-top: ${p => p.$at}px;
  background: #c8c8c8;
`;
const HThumb = styled.div`
  height: 100%;
  width: ${p => p.$len}px;
  margin-left: ${p => p.$at}px;
  background: #c8c8c8;
`;
const Arrow = ({ d }) => {
  const p = { u: 'M1 7l4-4 4 4', d: 'M1 3l4 4 4-4', l: 'M7 1L3 5l4 4', r: 'M3 1l4 4-4 4' }[d];
  return <IconSvg viewBox="0 0 10 10" $w={10} $h={10}><path d={p} fill="none" stroke="#666" strokeWidth="1.800" /></IconSvg>;
};

/* drawing panel */
const Tabs = styled.div`
  flex: none;
  height: 21px;
  margin-top: 2px;
  padding-left: 3px;
  display: flex;
  align-items: flex-end;
`;
const Tab = styled.div`
  display: flex;
  align-items: center;
  justify-content: center;
  width: ${p => p.$w}px;
  height: ${p => p.$active ? 21 : 17}px;
  border: 1px solid #b4b4b4;
  border-bottom: none;
  background: ${p => p.$active ? '#f7f7f7' : '#f0f0f0'};
`;
const TabPane = styled.div`
  flex: none;
  height: 414px;
  margin-left: 1px;
  width: 362px;
  border: 1px solid #c4c4c4;
  padding: 2px 1px 0 3px;
  display: flex;
  flex-direction: column;
`;
const BtnRow = styled.div`
  flex: none;
  height: 24px;
  width: 354px;
  display: flex;
  gap: 1px;
  background: #fff;
  border-bottom: 1px solid #c0c0c0;
`;
const SmBtn = styled.div`
  width: ${p => p.$w}px;
  height: 23px;
  display: flex;
  align-items: center;
  justify-content: center;
  background: #f0f0f0;
  border: 1px solid #b0b0b0;
`;
const GridFrame = styled.div`
  flex: none;
  height: 382px;
  width: 355px;
  margin-top: 1px;
  border: 2px solid #a8a8a8;
  display: flex;
  background: #fff;
`;
const GridClip = styled.div`
  flex: 1;
  min-width: 0;
  overflow: hidden;
`;
const Table = styled.table`
  table-layout: fixed;
  border-collapse: collapse;
  width: ${p => p.$w}px;
`;
const cellBase = css`
  height: ${p => p.$h || 19}px;
  border: 1px solid #bdbdbd;
  white-space: nowrap;
  overflow: hidden;
  font-weight: 400;
  position: relative;
`;
const Th = styled.th`
  ${cellBase}
  padding: 0;
  text-align: center;
  background: ${p => p.$hot ? 'linear-gradient(#fbdba0,#f5c062)' : 'linear-gradient(#fdfdfd,#ececec)'};
  color: ${p => p.$hot ? '#80007f' : '#111'};
  border-top: none;
`;
const RowHead = styled.td`
  ${cellBase}
  text-align: center;
  padding: 0;
  background: ${p => p.$hot ? '#fcd79c' : 'linear-gradient(#fafafa,#ececec)'};
  color: ${p => p.$hot ? '#80007f' : '#222'};
  border-left: none;
`;
const Td = styled.td`
  ${cellBase}
  padding: 0 3px 0 ${p => p.$pl ?? 3}px;
  background: ${p => p.$bg || '#fff'};
  color: ${p => p.$c || '#111'};
  ${p => p.$center && 'text-align: center;'}
  ${p => p.$leftEdge && 'border-left: 1px solid #111;'}
`;
const TreeCell = styled(Td)`
  padding-left: 30px;
  &::before {
    content: '';
    position: absolute;
    left: 8px;
    top: 0;
    height: ${p => p.$last ? 9 : 19}px;
    border-left: 1px solid ${p => p.$green ? '#cfe8cf' : '#bcbcbc'};
  }
  &::after {
    content: '';
    position: absolute;
    left: 8px;
    top: 9px;
    width: 17px;
    border-top: 1px solid ${p => p.$green ? '#cfe8cf' : '#bcbcbc'};
  }
  ${p => p.$focus && 'box-shadow: inset 0 0 0 2px #666;'}
`;
const Handle = styled.span`
  position: absolute;
  right: 0;
  bottom: 0;
  width: 5px;
  height: 5px;
  background: #777;
  border: 1px solid #fff;
  z-index: 2;
`;
const GroupInner = styled.span`
  display: flex;
  align-items: center;
  gap: 5px;
  padding-left: 2px;
`;
const PlusBox = styled.span`
  flex: none;
  width: 12px;
  height: 12px;
  margin-left: ${p => p.$ml || 0}px;
  border: 1px solid #a0a0a0;
  background: #fff;
  display: inline-flex;
  align-items: center;
  justify-content: center;
  font: 400 12px/10px "Liberation Sans", sans-serif;
  color: #222;
`;

/* layer panel */
const LayerBody = styled.div`
  flex: 1;
  border: 1px solid #a0a0a0;
  background: #fff;
  padding: 2px 0 0 8px;
  margin-bottom: 3px;
  margin-left: 1px;
`;
const LayerRow = styled.div`
  height: 14px;
  display: flex;
  align-items: center;
  gap: 0;
  white-space: nowrap;
`;
const Dots = styled.span`
  flex: none;
  width: 6px;
  margin: 0 3px 0 1px;
  border-top: 1px dotted #777;
`;
const LayerText = styled.span`margin-left: 3px;`;

/* CAD canvas */
const CanvasBox = styled.div`
  flex: none;
  height: 541px;
  margin-top: 2px;
  background: #000;
  overflow: hidden;
`;
const CadSvg = styled.svg`display: block; width: 1116px; height: 541px;`;
const CadText = styled.text`
  font-family: "Liberation Sans", sans-serif;
  font-size: 16.5px;
  fill: ${p => p.$c};
`;

const Y = '#d8d800', YD = '#a8a800', P = '#c86464', B = '#0b3fc8', W = '#c8c8c8';
const tx = (t, x, y, len, c) => ({ t, x, y, len, c });
const tv = (t, x, y, len, c) => ({ t, x, y, len, c, v: 1 });
const cadTexts = [
  tv('6700', 620, 314, 33, W), tv('2200', 620, 668, 33, W),
  tv('KL1 (3B)  200x600', 648, 587, 141, Y), tv('A8@100 (2)', 673, 587, 80, Y), tv('2C20', 697, 587, 37, Y),
  tv('3C20', 760, 424, 36, P), tx('5C18  3/2', 802, 456, 76, P),
  tv('L1a (1)  200x500', 877, 427, 131, YD), tv('A6@200 (2)', 901, 427, 80, YD), tv('2C14;2C14', 927, 427, 88, YD),
  tv('L2 (1A)  200x500', 967, 314, 131, YD), tv('A8@200 (2)', 992, 314, 81, YD), tv('2C20', 1016, 314, 36, YD),
  tv('2C14', 805, 229, 36, B), tv('3C20', 1123, 229, 36, B),
  tx('5C20  2/3', 1040, 501, 74, B), tx('A8@100/150 (2)', 1005, 527, 118, B),
  tv('2C14', 805, 583, 36, B),
  tx('L9 (3)   200x500', 1192, 242, 121, YD), tx('A6@200 (2)', 1192, 267, 80, YD), tx('2C20;2C20', 1192, 291, 83, YD),
  tx('3C20', 1345, 329, 36, B), tv('L1a (1)', 1168, 426, 52, YD), tx('6C18  3/3', 1278, 456, 74, B),
  tv('6C20  3/3', 1396, 424, 76, P), tv('5C22', 1442, 257, 36, P), tv('A10@100/150 (2)', 1467, 272, 120, P),
  tv('KL3 (1A)  200x400', 1606, 304, 141, Y), tv('A8@100/200 (2)', 1631, 304, 118, Y), tv('2C22', 1653, 304, 36, Y),
  tv('L1a (1)', 1549, 437, 51, YD), tx('2C18', 1545, 501, 36, B),
  tv('2C14', 1441, 583, 36, P), tv('200x400', 1467, 603, 63, P),
  tx('6C18  3/3', 1435, 631, 75, P), tx('5C18  3/2', 802, 631, 76, B), tx('5C20  2/3', 992, 677, 76, B),
  tv('L1a (1)', 932, 740, 51, YD), tv('3C20', 760, 742, 36, B),
  tv('L1a (1)', 1168, 728, 51, YD), tv('L1a (1)', 1550, 728, 51, YD),
  tv('6C20  3/3', 1397, 767, 76, B), tx('5C20  3/2', 1425, 759, 75, B),
];
const GREEN = '#00e600';
const beams = [
  [765, 222, 16, 541], [1401, 222, 16, 541],
  [781, 335, 872, 16], [781, 462, 872, 16], [781, 637, 872, 16],
  [956, 351, 16, 111], [956, 653, 16, 110],
  [1083, 222, 16, 113], [1083, 351, 16, 111], [1083, 653, 16, 110],
  [1211, 351, 15, 111], [1211, 653, 15, 110],
  [1592, 351, 16, 111], [1592, 653, 16, 110],
];
const purples = [[765, 526, 32, 48], [1390, 526, 39, 48], [765, 733, 32, 30], [1390, 733, 39, 30]];
const yellowLines = ['M629 592h136', 'M874 432h82', 'M947 319h136', 'M1186 222v113', 'M1148 432h63', 'M1594 310h59', 'M1529 443h63', 'M903 749h53', 'M1149 734h62', 'M1530 734h62'];
const upArrows = [[773, 482, 526], [964, 373, 432], [964, 683, 743], [1218, 372, 433], [1218, 682, 743], [1600, 372, 433], [1600, 682, 743], [773, 663, 715]];
const ringC = [[773, 234, ''], [1409, 234, '3'], [773, 750, '1'], [1409, 750, '3'], [550, 565, '1-F'], [550, 740, '1-E']];

const CadDrawing = () => (
  <CadSvg viewBox="537 222 1116 541">
    {cadTexts.map((d, k) => (
      <CadText key={k} x={d.x} y={d.y} $c={d.c} textLength={d.len} lengthAdjust="spacingAndGlyphs"
        transform={d.v ? `rotate(-90 ${d.x} ${d.y})` : undefined}>{d.t}</CadText>
    ))}
    <path d="M653.500 222v541M537 565.500h228M537 740.500h228M637 548l33 34M637 723l33 34" stroke="#008000" fill="none" />
    {yellowLines.map((d, k) => <path key={k} d={d} stroke="#ffff00" fill="none" />)}
    {beams.map((b, k) => <rect key={k} x={b[0]} y={b[1]} width={b[2]} height={b[3]} fill={GREEN} />)}
    <path d="M1012 343h476M1480 337l9 6-9 6M1091 222v85M773 222v59M773 574v16M1298 645.500h355M1409 470.500h244" stroke="#000" strokeWidth="1.600" fill="none" />
    {upArrows.map((a, k) => <path key={k} d={`M${a[0] - 5} ${a[1] + 9}L${a[0]} ${a[1]}L${a[0] + 5} ${a[1] + 9}M${a[0]} ${a[1]}V${a[2]}`} stroke="#000" strokeWidth="1.600" fill="none" />)}
    {purples.map((b, k) => <rect key={k} x={b[0]} y={b[1]} width={b[2]} height={b[3]} fill="#7300e0" />)}
    <path d="M773.500 222v541M797 565.500h856M773 740.500h880" stroke="#f00" strokeWidth="1" fill="none" />
    <path d="M1409 222v541" stroke="#a80000" strokeWidth="1" fill="none" />
    {ringC.map((c, k) => (
      <g key={k}>
        <circle cx={c[0]} cy={c[1]} r="12" fill="none" stroke="#0a9a0a" strokeDasharray="3 .6" />
        <CadText x={c[0]} y={c[1] + 5} $c={k > 3 ? '#ddd' : '#8ab0a0'} textAnchor="middle">{c[2]}</CadText>
      </g>
    ))}
    <path d="M591.500 713V672" stroke="#00e000" strokeWidth="4" />
    <path d="M591.500 664l-4 11h8z" fill="#00e000" />
    <path d="M592 713h36" stroke="#f00" strokeWidth="4" />
    <path d="M641 713l-12-4v8z" fill="#f00" />
    <circle cx="591.500" cy="713" r="4" fill="#0a84ff" />
    <path d="M601 668l4 5 4-5M605 673v6" stroke="#00e000" fill="none" />
    <path d="M629 693l9 9M638 693l-9 9" stroke="#f00" fill="none" />
    <path d="M579 709h8l-8 8h8" stroke="#0a84ff" fill="none" />
  </CadSvg>
);

/* Bottom panel */
const BottomWrap = styled.div`
  flex: none;
  height: 198px;
  margin-top: 7px;
  display: flex;
`;
const Gutter = styled.div`
  flex: none;
  width: 13px;
  padding: 0 0 0 1px;
  display: flex;
  flex-direction: column;
  align-items: flex-start;
`;
const GutterDots = styled.div`
  flex: 1;
  width: 8px;
  margin-top: 4px;
  background: radial-gradient(circle at 1px 1px, #b0b0b0 1px, transparent 1px) 0 0 / 4px 4px;
`;
const BottomMain = styled.div`
  flex: none;
  width: 1100px;
  display: flex;
  flex-direction: column;
`;
const BottomBar = styled(Bar)`
  flex: none;
  height: 25px;
  background: linear-gradient(#fdfdfd, #ececec);
  padding-left: 7px;
`;
const BottomFrame = styled.div`
  flex: none;
  height: 173px;
  border: 1px solid #a8a8a8;
  border-width: 2px 0 2px 2px;
  display: flex;
  flex-direction: column;
  background: #fff;
`;
const BottomClip = styled.div`
  flex: 1;
  min-height: 0;
  overflow: hidden;
`;

/* Properties panel */
const PropFrame = styled.div`
  flex: 1;
  margin: 3px 0 3px 1px;
  border: 1px solid #a0a0a0;
  border-top: 1px solid #c8c8c8;
  background: #fff;
`;
const Sogou = styled.div`
  position: absolute;
  left: 1713px;
  top: 462px;
  width: 207px;
  height: 26px;
  display: flex;
  align-items: center;
`;
const SogouLogo = styled.div`
  flex: none;
  width: 28px;
  height: 26px;
  border-radius: 6px;
  background: linear-gradient(#ff7a3a, #e8481a);
  color: #fff;
  font: 700 22px/26px "Liberation Sans", sans-serif;
  text-align: center;
  transform: skew(-8deg);
  z-index: 1;
`;
const SogouBar = styled.div`
  flex: 1;
  height: 24px;
  margin-left: -2px;
  background: #fff;
  border: 1px solid #ddd;
  border-right: none;
  display: flex;
  align-items: center;
  gap: 7px;
  padding-left: 8px;
  color: #1a6fc4;
  font-weight: 700;
  font-size: 14px;
`;

const floorRows = (n, k) => [
  { g: `第${k}层`, n },
  { n: n + 1, name: '二~屋面柱配筋', a: '第2层,第', b: '柱大样', c: '1:1' },
  { n: n + 2, name: '三~六层楼面梁', a: '(第2层,', b: '(梁)', c: '1:1', green: 1 },
  { n: n + 3, name: '三~六层楼面板', a: '(第2层,', b: '(板,板筋', c: '1:1', last: 1 },
];
const sheetRows = [
  { n: 7, name: '基顶~一层柱配', a: '(基础层,', b: '(柱大样)', c: '1:1' },
  { n: 8, name: '二层楼面梁配筋', a: '(首层)', b: '(梁)', c: '1:1' },
  { n: 9, name: '二层楼面板配筋', a: '(首层)', b: '(板,板筋', c: '1:1', last: 1 },
  ...floorRows(10, 2), ...floorRows(14, 3), ...floorRows(18, 4), ...floorRows(22, 5),
];

const SheetTable = () => (
  <Table $w={315}>
    <colgroup><col width="30" /><col width="117" /><col width="56" /><col width="56" /><col width="56" /></colgroup>
    <thead>
      <tr>
        <Th $h={26} />
        <Th $h={26} $hot>图纸名称</Th>
        <Th $h={26}>对应楼层</Th>
        <Th $h={26}>对应构件</Th>
        <Th $h={26}>图纸比例</Th>
      </tr>
    </thead>
    <tbody>
      {sheetRows.map(r => {
        const hot = r.n === 12;
        if (r.g) {
          return (
            <tr key={r.n}>
              <RowHead>{r.n}</RowHead>
              <Td colSpan={4} $pl={2}><GroupInner><PlusBox>−</PlusBox>{r.g}</GroupInner></Td>
            </tr>
          );
        }
        const bg = r.green ? '#008000' : '#fff';
        const c = r.green ? '#022a02' : '#111';
        return (
          <tr key={r.n}>
            <RowHead $hot={hot}>{r.n}</RowHead>
            <TreeCell $bg={bg} $c={c} $green={r.green} $last={r.last} $focus={hot}>
              {r.name}{hot && <Handle />}
            </TreeCell>
            <Td $bg={bg} $c={c}>{r.a}</Td>
            <Td $bg={bg} $c={c}>{r.b}</Td>
            <Td $bg={bg} $c={c}>{r.c}</Td>
          </tr>
        );
      })}
    </tbody>
  </Table>
);

const propRows = [
  ['名称', 'L7(13)', 0, 0, 'sel'],
  ['类别', '非框架梁', 1, 1], ['截面宽度(mm)', '200', 0, 1], ['截面高度(mm)', '400', 0, 1],
  ['轴线距梁左边线距', '(100)', 0, 1], ['跨数量', '13', 0, 1], ['箍筋', '\u03a68@200(2)', 1, 1], ['肢数', '2', 1, 0],
  ['上部通长筋', '2\u4e2018', 1, 1], ['下部通长筋', '2\u4e2022', 1, 1], ['侧面构造或受扭筋', '', 1, 1], ['拉筋', '', 1, 1],
  ['其它箍筋', '', 1, 0], ['备注', '', 0, 1],
];
const PropTable = () => (
  <Table $w={259}>
    <colgroup><col width="21" /><col width="120" /><col width="86" /><col width="32" /></colgroup>
    <thead>
      <tr>
        <Th $h={23} />
        <Th $h={23}>属性名称</Th>
        <Th $h={23} $hot>属性值</Th>
        <Th $h={23}>附加</Th>
      </tr>
    </thead>
    <tbody>
      {propRows.map((r, k) => {
        const sel = r[4] === 'sel';
        return (
          <tr key={k}>
            <RowHead $hot={sel}>{k + 1}</RowHead>
            <Td $pl={20} $bg={sel ? '#0078d7' : '#fff'} $c={sel ? '#fff' : r[2] ? '#0000f0' : '#111'}>{r[0]}</Td>
            <Td $bg={sel ? '#d3e6f6' : '#fff'}>{r[1]}</Td>
            <Td $center>{r[3] ? <Check /> : null}</Td>
          </tr>
        );
      })}
      {[[15, '其它属性'], [23, '锚固搭接'], [38, '显示样式']].map(r => (
        <tr key={r[0]}>
          <RowHead>{r[0]}</RowHead>
          <Td $pl={2} $c="#808080"><GroupInner><PlusBox>+</PlusBox>{r[1]}</GroupInner></Td>
          <Td />
          <Td />
        </tr>
      ))}
    </tbody>
  </Table>
);

const rebarCols = [['', 32], ['筋号', 73], ['直径(mm)', 55, 1], ['级别', 37], ['图号', 33], ['图形', 201], ['计算公式', 166], ['公式描述', 155], ['长度(mm)', 61], ['根数', 38], ['搭接', 38], ['损耗(%)', 50], ['单重(kg)', 60], ['总重(kg)', 61], ['钢筋', 40]];
const RebarTable = () => (
  <Table $w={1100}>
    <colgroup>{rebarCols.map((c, k) => <col key={k} width={c[1]} />)}</colgroup>
    <thead>
      <tr>{rebarCols.map((c, k) => <Th key={k} $h={20} $hot={c[2]}>{c[0]}</Th>)}</tr>
    </thead>
    <tbody>
      <tr>
        {rebarCols.map((c, k) => k === 0
          ? <RowHead key={k} $hot>1*</RowHead>
          : <Td key={k} $bg={c[2] ? '#d3e6f6' : '#fff'} $leftEdge={c[2]} />)}
      </tr>
    </tbody>
  </Table>
);

const treeData = [
  { f: '轴线' },
  { f: '柱', kids: [['框柱(Z)', 'col'], ['暗柱(Z)', 'col'], ['端柱(Z)', 'col'], ['构造柱(Z)', 'gz']] },
  { f: '墙' }, { f: '门窗洞' },
  { f: '梁', kids: [['梁(L)', 'beam'], ['圈梁(E)', 'ring']] },
  { f: '板', kids: [['现浇板(B)', 'slab'], ['螺旋板(B)', 'spiral'], ['柱帽(V)', 'cap'], ['板洞(N)', 'hole'], ['板受力筋(S)', 'rebar'], ['板负筋(F)', 'neg'], ['楼层板带(H)', 'band']] },
  { f: '空心楼盖', kids: [['空心楼盖板(B)', 'grid4'], ['空心楼盖柱帽(V)', 'capr'], ['主肋梁(L)', 'beam'], ['成孔芯模(E)', 'core'], ['次肋梁(U)', 'rib'], ['次肋梁下部筋(X)', 'ribd'], ['次肋梁支座筋(Z)', 'ribu'], ['空档(P)', 'gapb'], ['空心楼盖板受力筋', 'rebard']] },
  { f: '基础' }, { f: '其它' }, { f: '自定义' },
  { f: 'CAD识别', isNew: 1, kids: [['CAD草图', 'cadDoc'], ['智能识别', 'smart'], ['识别轴网', 'axisr'], ['识别柱大样', 'cadDoc'], ['识别柱', 'rcol'], ['识别墙', 'rwall'], ['识别门窗洞', 'rdoor'], ['识别梁', 'rbeam', 1], ['识别板', 'rslab'], ['识别受力筋', 'rbar'], ['识别负筋', 'rneg'], ['识别独立基础', 'rfnd'], ['识别桩承台', 'rcap'], ['识别桩', 'rpile'], ['识别成孔芯模', 'cadDoc']] },
];
const TreeView = () => treeData.map((n, k) => {
  const lastRoot = k === treeData.length - 1;
  return (
    <React.Fragment key={k}>
      <TreeRow $endRoot={lastRoot && !n.kids}>
        <Twisty><Chev open={!!n.kids} /></Twisty>
        <Ico n={n.kids ? 'folderOpen' : 'folder'} />
        <TreeLabel>{n.f}</TreeLabel>
        {n.isNew && <><SmallIconSlot><Ico n="lines" /></SmallIconSlot><NewBadge>NEW</NewBadge></>}
      </TreeRow>
      {n.kids && n.kids.map((c, j) => (
        <TreeRow key={j} $child $last={j === n.kids.length - 1}>
          <ChildDash />
          <Ico n={c[1]} />
          <TreeLabel $ml={c[2] ? 1 : 4} $sel={c[2]}>{c[0]}</TreeLabel>
        </TreeRow>
      ))}
    </React.Fragment>
  );
});

const rowA = [
  { i: 'erase', t: '删除', off: 1 }, '|',
  { i: 'copy', t: '复制', off: 1 }, { i: 'mirror', t: '镜像', off: 1 }, '|',
  { i: 'move', t: '移动', off: 1 }, { i: 'rot', t: '旋转', off: 1 }, '|',
  { i: 'extend', t: '延伸', off: 1 }, { i: 'trim', t: '修剪', off: 1 }, '|',
  { i: 'brk', t: '打断', off: 1 }, { i: 'merge', t: '合并', off: 1 }, { i: 'split', t: '分割', off: 1 }, '|',
  { i: 'alignl', t: '对齐', off: 1, c: 6 }, { i: 'offset', t: '偏移', off: 1 }, { i: 'stretch', t: '拉伸', off: 1 }, '|',
  { i: 'grips', t: '设置夹点', off: 1 },
];
const rowC = [
  { i: 'cursor', t: '选择', off: 1, c: 11 }, { sep: 1, l: 4, r: 0 },
  { i: 'orig', t: '原位标注', off: 1, c: 11 }, { i: 'rebeam', t: '重提梁跨', off: 1, c: 11 }, { i: 'apply', t: '应用到同名梁', off: 1 },
];
const rowD = [
  { i: 'cadpin', t: '定位CAD图', off: 1 }, { i: 'cadclr', t: '清除CAD图', off: 1 }, { i: 'scale', w: 14, t: '设置比例', off: 1 },
  { i: 'swap', t: '批量替换', off: 1 }, { i: 'restore', t: '还原CAD图元', off: 1 }, { i: 'redraw', w: 14, t: '补画CAD线', off: 1 }, '|',
  { i: 'cadedit', w: 14, t: '修改CAD标注', off: 1 }, { i: 'pic', t: '图片管理', off: 1, c: 6 },
];
const rowE1 = [{ i: 'phi', t: '转换符号', off: 1 }, { i: 'lbl', t: '识别连梁表', off: 1 }];
const rowE2 = [
  { i: 'edge', t: '提取梁边线', off: 1 }, { i: 'mark', t: '提取梁标注', off: 1, c: 6, tight: 1 },
  { i: 'recog', t: '识别梁', off: 1, c: 6, tight: 1 }, { i: 'support', t: '查改支座', off: 1, c: 6, tight: 1 },
  { i: 'recmark', t: '识别原位标注', off: 1, c: 6, tight: 1, ml: 3 }, { i: 'check', t: '梁原位标注校核', off: 1 },
  { i: 'hang', t: '识别吊筋', off: 1, c: 6, tight: 1 }, { i: 'recbeam', t: '识别梁构件', off: 1 },
];
const rowF = [
  { i: 'cadshow', t: '显示指定图层', off: 1 }, { i: 'cadhide', t: '隐藏指定图层', off: 1 }, { sep: 1, r: 0 },
  { i: 'cadsel', t: '选择同图层CAD图元', off: 1 }, { i: 'cadcol', t: '选择同颜色CAD图元', off: 1 },
];
const rowB2 = [
  { i: 'xtwo', w: 14, t: '两点' }, { i: 'xpar', t: '平行' }, { i: 'xang', w: 14, t: '点角', c: 11 },
  { i: 'xarc', t: '三点辅轴', c: 11 }, { i: 'xdel', t: '删除辅轴' }, { i: 'dim', t: '尺寸标注', off: 1, c: 11 },
];
const mainTools = [
  { i: 'eye', t: '隐藏' }, { i: 'deflist', t: '定义', off: 1 }, { i: 'sigma', w: 12, t: '汇总计算' }, { i: 'cloud', t: '云检查' },
  { i: 'align', t: '平齐板顶', off: 1 }, { i: 'binoc', t: '查找图元' }, { i: 'glasses', w: 14, t: '查看钢筋量' }, { i: 'gridsel', w: 14, t: '批量选择' },
  { i: 'rebar3d', t: '钢筋三维', off: 1 }, { i: 'lock', w: 14, t: '锁定' }, { i: 'unlock', t: '解锁' }, { i: 'brushdel', t: '批量删除未使用构件' },
];
const mainTools2 = [
  { i: 'cube', t: '三维', c: 11 }, { i: 'cube', t: '俯视', c: 11 }, { i: 'orbit', t: '动态观察' }, { i: 'local3d', t: '局部三维', off: 1 },
  { sep: 1, l: 1, r: 1 },
  { i: 'zoomall', t: '全屏' }, { i: 'zoom', t: '缩放', c: 11 }, { i: 'hand', t: '平移', c: 11 }, { i: 'rotscreen', t: '屏幕旋转', off: 1, c: 6 },
  { sep: 1, l: 4, r: 4 },
  { i: 'floors', w: 14, t: '选择楼层' }, { i: 'wire', t: '线框' },
];
const statusA = [
  { i: 'ortho', t: '正交' }, { i: 'snap', w: 15, t: '对象捕捉', sel: 1 }, { i: 'dyn', w: 15, t: '动态输入', sel: 1 },
];
const statusB = [
  { i: 'inter', t: '交点' }, { i: 'perp', w: 14, t: '垂点', sel: 1 }, { i: 'mid', w: 14, t: '中点', sel: 1 }, { i: 'vert', t: '顶点' }, { i: 'coord', t: '坐标' },
];
const bottomTools = [
  { i: 'first', w: 14, off: 1 }, { i: 'prev', w: 14, off: 1, ml: 3 }, { i: 'next', w: 14, off: 1 }, { i: 'last', w: 14, off: 1, ml: 3 }, { sep: 1, l: 2, r: 1 },
  { i: 'up', w: 14, off: 1 }, { i: 'down', w: 14, off: 1, ml: 1 }, { sep: 1, l: 3, r: 1 },
  { i: 'ins', t: '插入', off: 1 }, { i: 'del', t: '删除', off: 1 }, { i: 'bend', w: 14, t: '缩尺配筋', off: 1, ml: 2 }, { i: 'info', t: '钢筋信息', off: 1 },
  { i: 'lib', t: '钢筋图库', off: 1 }, { i: 'other', t: '其他', c: 6, tight: 1 }, { t: '关闭', ml: 3 }, { sep: 1, l: 4, r: 2 },
  { t: '单构件钢筋总重(kg): 0' },
];
const menus = [['文件(F)'], ['编辑(E)'], ['楼层(L)'], ['构件(N)'], ['CAD识别(C)', 3], ['修改(M)', 4], ['钢筋量(Q)', 3], ['视图(V)'], ['工具(T)', 3], ['云应用(Y)', 1], ['BIM应用(I)', 5], ['在线服务(S)', 2], ['帮助(H)', -3], ['版本号(B)', -1]];

export default function App() {
  return (
    <Page>
      <Global />
      <MenuBar>
        {menus.map(m => <MenuItem key={m[0]} $ml={m[1]}>{m[0]}</MenuItem>)}
        <MenuExtra><Ico n="newchg" /><span>新建变更</span><CaretBox $w={14} /></MenuExtra>
        <MenuRight>
          <Ico n="login" /><Txt>登录</Txt>
          <Txt $ml={6}><Ico n="bell" /></Txt>
          <Txt $ml={6}><Ico n="chat" /></Txt><Txt>我要建议</Txt>
        </MenuRight>
      </MenuBar>

      <Strip $h={27}>
        <Bar $ml={3} $white>
          <Tool i="page" w={14} />
          <Tool i="open" ml={-1} c={10} />
          <Tool i="save" w={14} ml={2} />
          <Sep />
          <Tool i="undo" w={13} ml={4} off c={12} />
          <Tool i="redo" w={13} ml={1} off c={14} />
        </Bar>
        <Bar $ml={3}>{tools(mainTools)}</Bar>
        <Bar $ml={3}>{tools(mainTools2)}</Bar>
      </Strip>

      <Workspace>
        <Col $w={165} $mr={5}>
          <Title>模块导航栏<TitleBtns><Pin /><Cross /></TitleBtns></Title>
          <NavBtn $h={21} $mt={2}>工程设置</NavBtn>
          <NavBtn $h={22} $mt={1}>绘图输入</NavBtn>
          <TreeTools><Ico n="plus2" /><Ico n="minus2" /></TreeTools>
          <TreeFrame>
            <TreeBody>
              <TreeList><TreeView /></TreeList>
              <VScroll>
                <ArrowSlot $h={30}><Arrow d="u" /></ArrowSlot>
                <Track><VThumb $at={91} $len={645} /></Track>
                <ArrowSlot $h={18}><Arrow d="d" /></ArrowSlot>
              </VScroll>
            </TreeBody>
            <HScroll>
              <ArrowSlot $w={17}><Arrow d="l" /></ArrowSlot>
              <Track><HThumb $at={0} $len={85} /></Track>
              <ArrowSlot $w={50}><Arrow d="r" /></ArrowSlot>
            </HScroll>
          </TreeFrame>
          <NavBtn $h={21} $mt={1}>单构件输入</NavBtn>
          <NavBtn $h={22} $mt={1}>报表预览</NavBtn>
        </Col>

        <Col $w={364} $mr={3}>
          <Title>图纸管理<TitleBtns><Pin /><Cross /></TitleBtns></Title>
          <Tabs>
            <Tab $w={82}>图纸文件列表</Tab>
            <Tab $w={99} $active>图纸楼层对照表</Tab>
          </Tabs>
          <TabPane>
            <BtnRow>
              <SmBtn $w={70}>识别楼层表</SmBtn>
              <SmBtn $w={57}>重新对应</SmBtn>
              <SmBtn $w={57}>清除对应</SmBtn>
            </BtnRow>
            <GridFrame>
              <GridClip><SheetTable /></GridClip>
              <VScroll>
                <ArrowSlot $h={18}><Arrow d="u" /></ArrowSlot>
                <Track><VThumb $at={69} $len={171} /></Track>
                <ArrowSlot $h={16}><Arrow d="d" /></ArrowSlot>
              </VScroll>
            </GridFrame>
          </TabPane>
          <Title $active $h={16} $mt={7}>CAD图层显示<TitleBtns><Pin c="#fff" /><Cross c="#fff" /></TitleBtns></Title>
          <LayerBody>
            <LayerRow><Chev c="#999" /><Dots /><Check $on /><LayerText>已提取的CAD图层</LayerText></LayerRow>
            <LayerRow><Chev c="#999" /><Dots /><Check /><LayerText>CAD原始图层</LayerText></LayerRow>
          </LayerBody>
        </Col>

        <Col $w={1116} $mr={3}>
          <Strip>
            <Bar><Grip $ml={5} $w={2} />{tools(rowA)}</Bar>
          </Strip>
          <Strip $mt={3}>
            <Bar><Grip $ml={5} $w={4} />
              <Combo $w={58} $framed>第2层<ComboArrow $plain /></Combo>
              <Combo $w={70} $ml={1}>CAD识别<ComboArrow /></Combo>
              <Combo $w={69} $ml={3}>识别梁<ComboArrow /></Combo>
              <Combo $w={69} $ml={3}>L7(13)<ComboArrow /></Combo>
              <Combo $w={69} $ml={3}>分层1<ComboArrow /></Combo>
              <Sep $l={5} $r={2} />
              <Tool i="prop" w={14} t="属性" sel />
              <Tool i="pen" w={15} t="编辑钢筋" sel />
              <Tool i="list" t="构件列表" />
              <Tool i="dropper" w={14} t="拾取构件" />
            </Bar>
            <Bar $ml={3}><Grip $ml={3} $w={4} />{tools(rowB2)}</Bar>
          </Strip>
          <Strip $mt={5}>
            <Bar><Grip $ml={5} $w={2} />{tools(rowC)}</Bar>
            <Bar $ml={540} $white><Grip $ml={3} $w={28} /></Bar>
          </Strip>
          <Strip $mt={3}>
            <Bar><Grip $ml={5} $w={2} />{tools(rowD)}</Bar>
          </Strip>
          <Strip $mt={3}>
            <Bar><Grip $ml={5} $w={2} />{tools(rowE1)}</Bar>
            <Bar $ml={2}><Grip $ml={3} $w={3} />{tools(rowE2)}</Bar>
          </Strip>
          <Strip $mt={2}>
            <Bar><Grip $ml={5} $w={2} />{tools(rowF)}</Bar>
          </Strip>
          <CanvasBox><CadDrawing /></CanvasBox>
          <Strip $mt={3}>
            <Bar><Grip $ml={5} $w={2} />{tools(statusA)}</Bar>
            <Bar><Grip $ml={5} $w={5} />{tools(statusB)}</Bar>
            <Bar $pr={3}><Grip $ml={6} $w={3} />
              <Combo $w={58}>不偏移<ComboArrow /></Combo>
              <Sep $l={4} $r={2} />
              <Txt $c="#777">X=</Txt>
              <NumBox $w={58} $ml={3}>0<Spin /></NumBox>
              <Txt $c="#777" $ml={2}>mm</Txt>
              <Txt $c="#777" $ml={5}>Y=</Txt>
              <NumBox $w={58} $ml={3}>0<Spin /></NumBox>
              <Txt $c="#777" $ml={2}>mm</Txt>
              <Sep $l={4} $r={2} />
              <Check $c="#888" />
              <Txt $ml={9}>旋转</Txt>
              <NumBox $w={68} $ml={5}>0.000<Spin /></NumBox>
              <Txt $c="#777" $ml={4}>°</Txt>
            </Bar>
          </Strip>
          <BottomWrap>
            <Gutter>
              <Cross c="#c33" />
              <GutterDots />
            </Gutter>
            <BottomMain>
              <BottomBar>{tools(bottomTools)}</BottomBar>
              <BottomFrame>
                <BottomClip><RebarTable /></BottomClip>
                <HScroll>
                  <ArrowSlot $w={16}><Arrow d="l" /></ArrowSlot>
                  <Track><HThumb $at={0} $len={707} /></Track>
                  <ArrowSlot $w={14}><Arrow d="r" /></ArrowSlot>
                </HScroll>
              </BottomFrame>
            </BottomMain>
          </BottomWrap>
        </Col>

        <Col $w={262}>
          <Title>属性编辑器<TitleBtns><Pin /><Cross /></TitleBtns></Title>
          <PropFrame><PropTable /></PropFrame>
        </Col>
      </Workspace>

      <Sogou>
        <SogouLogo>S</SogouLogo>
        <SogouBar>
          <span>中</span><span>°,</span>
          <Ico n="smile" /><Ico n="mic" /><Ico n="kbd" /><Ico n="userlock" /><Ico n="shirt" /><Ico n="apps" />
        </SogouBar>
      </Sogou>
    </Page>
  );
}
